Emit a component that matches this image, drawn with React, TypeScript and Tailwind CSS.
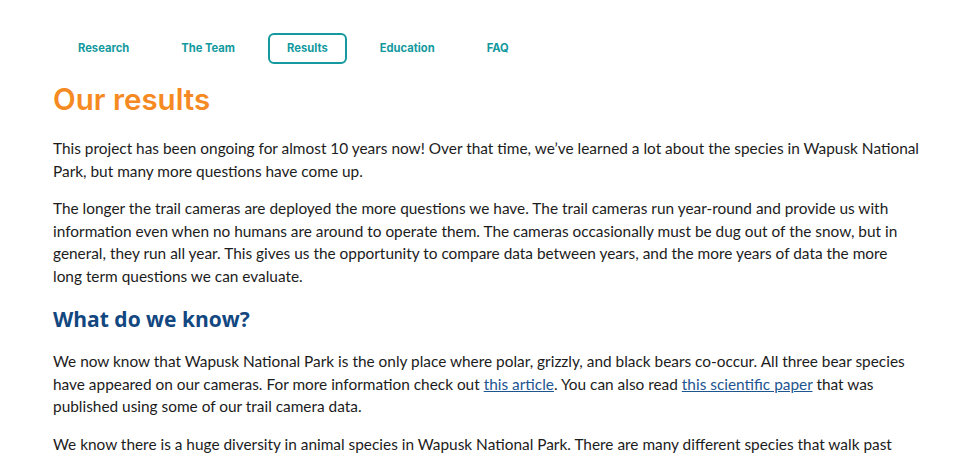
const tabs = ["Research", "The Team", "Results", "Education", "FAQ"];

export default function App() {
  return (
    <div className="min-h-screen bg-white text-[#1c1c1c]" style={{ fontFamily: "Lato, 'Open Sans', sans-serif" }}>
      <div className="ml-[53px] w-[867px] pt-[33px]">
        {/* Tabs */}
        <nav className="ml-[6px] flex gap-[14px]">
          {tabs.map((t) => (
            <a
              key={t}
              className={
                "flex h-[31px] items-center rounded-[6px] border-2 px-[17px] text-[11.2px] font-bold text-[#13999e] [font-family:Inter,sans-serif] " +
                (t === "Results" ? "border-[#13999e]" : "border-transparent")
              }
            >
              {t}
            </a>
          ))}
        </nav>

        <h1 className="mt-[18px] text-[29.5px] font-semibold leading-[34px] text-[#f68a22] [font-family:Inter,sans-serif]">
          Our results
        </h1>

        <p className="mt-[21px] text-[15.4px] leading-[22.5px]">
          This project has been ongoing for almost 10 years now! Over that time, we’ve learned a lot about the species in
          Wapusk National Park, but many more questions have come up.
        </p>
        <p className="mt-[15px] text-[15.4px] leading-[22.5px]">
          The longer the trail cameras are deployed the more questions we have. The trail cameras run year-round and
          provide us with information even when no humans are around to operate them. The cameras occasionally must be
          dug out of the snow, but in general, they run all year. This gives us the opportunity to compare data between
          years, and the more years of data the more long term questions we can evaluate.
        </p>

        <h2 className="mt-[18px] text-[21px] font-bold leading-[28px] text-[#12477f] [font-family:'Open_Sans',sans-serif]">
          What do we know?
        </h2>

        <p className="mt-[17px] text-[15.4px] leading-[22.5px]">
          We now know that Wapusk National Park is the only place where polar, grizzly, and black bears co-occur. All
          three bear species have appeared on our cameras. For more information check out{" "}
          <a className="text-[#1d5590] underline">this article</a>. You can also read{" "}
          <a className="text-[#1d5590] underline">this scientific paper</a> that was published using some of our trail
          camera data.
        </p>
        <p className="mt-[15px] pr-[10px] text-[15.4px] leading-[22.5px]">
          We know there is a huge diversity in animal species in Wapusk National Park. There are many different species
          that walk past our cameras each year, from the smallest weasels to the largest bears.
        </p>
      </div>
    </div>
  );
}
